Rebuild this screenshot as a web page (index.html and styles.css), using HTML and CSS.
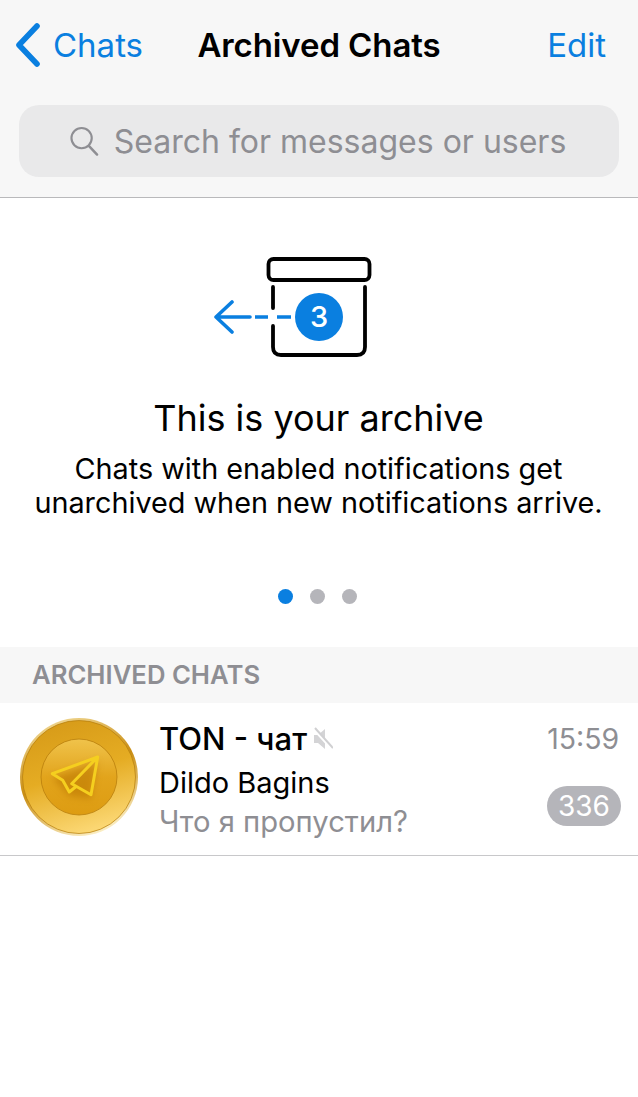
FILE: index.html
```html
<!DOCTYPE html>
<html lang="en">
<head>
    <meta charset="UTF-8">
    <meta name="viewport" content="width=device-width, initial-scale=1.0">
    <title>Archived Chats</title>
    <link rel="stylesheet" href="styles.css">
</head>
<body>
    <div class="top">
        <div class="nav">
            <a class="back">
                <svg class="back-icon" width="26" height="44" viewBox="0 0 26 44"><path d="M22 3 L4 22 L22 41" fill="none" stroke="#0a7fe0" stroke-width="5.6" stroke-linecap="round" stroke-linejoin="round"/></svg>
                <span>Chats</span>
            </a>
            <h1 class="title">Archived Chats</h1>
            <a class="edit">Edit</a>
        </div>
        <div class="search">
            <svg width="29" height="32" viewBox="0 0 30 32"><circle cx="12" cy="13" r="10.5" fill="none" stroke="#8e8e93" stroke-width="2.2"/><path d="M19.5 21 L28 30" fill="none" stroke="#8e8e93" stroke-width="2.6" stroke-linecap="round"/></svg>
            <span>Search for messages or users</span>
        </div>
    </div>

    <div class="banner">
        <svg class="archive-icon" width="158" height="102" viewBox="0 0 158 102">
            <rect x="54.5" y="2" width="101" height="21" rx="5" fill="none" stroke="#000" stroke-width="3.8"/>
            <path d="M59 30 V51 M59 69 V90 Q59 98 67 98 H143 Q151 98 151 90 V30" fill="none" stroke="#000" stroke-width="3.8" stroke-linecap="round"/>
            <path d="M36 60 H2 M18 45 L2 60 L18 75" fill="none" stroke="#0a7fe0" stroke-width="3.6" stroke-linecap="round" stroke-linejoin="round"/>
            <path d="M41 60 H54 M63 60 H77" fill="none" stroke="#0a7fe0" stroke-width="3.6"/>
            <circle cx="105" cy="60" r="24" fill="#0a7fe0"/>
            <text x="105" y="70" text-anchor="middle" class="badge-num">3</text>
        </svg>
        <h2 class="banner-title">This is your archive</h2>
        <p class="banner-text">Chats with enabled notifications get<br>unarchived when new notifications arrive.</p>
        <div class="dots">
            <span class="dot active"></span>
            <span class="dot"></span>
            <span class="dot"></span>
        </div>
    </div>

    <div class="section">ARCHIVED CHATS</div>

    <div class="chat">
        <svg class="avatar" width="120" height="120" viewBox="0 0 120 120">
            <defs>
                <linearGradient id="rim" x1="0.2" y1="0" x2="0.6" y2="1">
                    <stop offset="0" stop-color="#f3dc9a"/>
                    <stop offset="0.5" stop-color="#c98d12"/>
                    <stop offset="1" stop-color="#fbeec4"/>
                </linearGradient>
                <linearGradient id="face" x1="0.2" y1="0" x2="0.5" y2="1">
                    <stop offset="0" stop-color="#d69a18"/>
                    <stop offset="0.5" stop-color="#e5ac23"/>
                    <stop offset="1" stop-color="#fbd773"/>
                </linearGradient>
                <linearGradient id="inner" x1="0" y1="0" x2="0" y2="1">
                    <stop offset="0" stop-color="#f0c34b"/>
                    <stop offset="0.5" stop-color="#e2a41c"/>
                    <stop offset="1" stop-color="#dd9c12"/>
                </linearGradient>
                <filter id="soft" x="-30%" y="-30%" width="160%" height="160%">
                    <feGaussianBlur stdDeviation="3.5"/>
                </filter>
            </defs>
            <circle cx="60" cy="60" r="59" fill="url(#rim)"/>
            <circle cx="60" cy="60" r="56.5" fill="url(#face)" stroke="#b57c0c" stroke-width="0.7"/>
            <circle cx="60" cy="60" r="38" fill="url(#inner)" stroke="#b97f0c" stroke-width="0.8"/>
            <path class="plane-shadow" d="M78.7 44 L33.3 61 L50 79 L72 82 Z" filter="url(#soft)"/>
            <path class="plane" d="M78.7 40 L33.3 56.7 L43.7 63.3 L50.3 75 L57.7 69 M78.7 40 L52.7 66.7 L72 77.7 Z"/>
        </svg>
        <div class="chat-body">
            <div class="chat-line">
                <div class="chat-name">
                    <span>TON - чат</span>
                    <svg width="20" height="24" viewBox="0 0 20 24"><path d="M1 8 H5 L12 2 V22 L5 16 H1 Z" fill="#d4d4d6"/><path d="M1 2 L19 22" stroke="#fff" stroke-width="3"/><path d="M2 1 L20 21" stroke="#d0d0d2" stroke-width="2"/></svg>
                </div>
                <span class="chat-time">15:59</span>
            </div>
            <div class="chat-line chat-lower">
                <div class="chat-preview">
                    <div class="chat-author">Dildo Bagins</div>
                    <div class="chat-msg">Что я пропустил?</div>
                </div>
                <span class="chat-count">336</span>
            </div>
        </div>
    </div>
</body>
</html>
```

FILE: styles.css
```css
body {
    font-family: 'Inter', 'Liberation Sans', sans-serif;
    background-color: #fff;
    color: #000;
    margin: 0;
    padding: 0;
}
.top {
    background-color: #f7f7f7;
    border-bottom: 1px solid #b9b9bb;
    height: 198px;
    box-sizing: border-box;
    padding: 0 19px;
}
.nav {
    height: 105px;
    padding-bottom: 15px;
    box-sizing: border-box;
    display: grid;
    grid-template-columns: 1fr auto 1fr;
    align-items: center;
}
.back {
    display: flex;
    align-items: center;
    gap: 12px;
    color: #0a7fe0;
    font-size: 33px;
    margin-left: -4px;
}
.back-icon {
    display: block;
}
.title {
    font-size: 33px;
    font-weight: 600;
    margin: 0;
    letter-spacing: -0.1px;
}
.edit {
    color: #0a7fe0;
    font-size: 33px;
    margin-right: 13px;
    text-align: right;
}
.search {
    height: 72px;
    background-color: #e9e9ea;
    border-radius: 20px;
    display: flex;
    align-items: center;
    justify-content: center;
    gap: 15px;
    padding-right: 2px;
    color: #8e8e93;
    font-size: 32px;
}
.banner {
    height: 449px;
    box-sizing: border-box;
    padding: 59px 1px 0 0;
    display: flex;
    flex-direction: column;
    align-items: center;
    text-align: center;
}
.archive-icon {
    display: block;
    margin-right: 52px;
}
.badge-num {
    fill: #fff;
    font-size: 29px;
    font-weight: 500;
}
.banner-title {
    font-size: 36px;
    line-height: 44px;
    font-weight: 400;
    margin: 37px 0 0;
}
.banner-text {
    font-size: 28.8px;
    line-height: 34px;
    margin: 12px 0 0;
}
.dots {
    display: flex;
    gap: 17px;
    margin-top: 69px;
    margin-right: 2px;
}
.dot {
    width: 15px;
    height: 15px;
    border-radius: 50%;
    background-color: #b5b5ba;
}
.dot.active {
    background-color: #0a7fe0;
}
.section {
    background-color: #f7f7f7;
    height: 56px;
    line-height: 56px;
    padding-left: 32px;
    color: #8e8e93;
    font-size: 25.7px;
    font-weight: 600;
}
.chat {
    height: 153px;
    box-sizing: border-box;
    border-bottom: 1px solid #c8c8ca;
    display: flex;
    align-items: flex-start;
    padding: 14px 17px 0 19px;
}
.avatar {
    flex: none;
    display: block;
}
.plane {
    fill: none;
    stroke: #f5cf1f;
    stroke-width: 3;
    stroke-linejoin: round;
}
.plane-shadow {
    fill: #b97406;
    opacity: 0.55;
}
.chat-body {
    flex: 1;
    margin-left: 20px;
    padding-top: 3px;
}
.chat-line {
    display: flex;
    justify-content: space-between;
    align-items: center;
}
.chat-name {
    display: flex;
    align-items: center;
    gap: 6px;
    font-size: 31px;
    font-weight: 500;
}
.chat-time {
    color: #8e8e93;
    font-size: 28.4px;
    margin-right: 2px;
}
.chat-lower {
    margin-top: 7px;
}
.chat-author {
    font-size: 29px;
    line-height: 38px;
}
.chat-msg {
    color: #8e8e93;
    font-size: 29.2px;
    line-height: 39px;
}
.chat-count {
    background-color: #b5b5ba;
    color: #fff;
    font-size: 28px;
    width: 74px;
    height: 40px;
    line-height: 40px;
    text-align: center;
    border-radius: 20px;
    margin-top: 6px;
}
```
